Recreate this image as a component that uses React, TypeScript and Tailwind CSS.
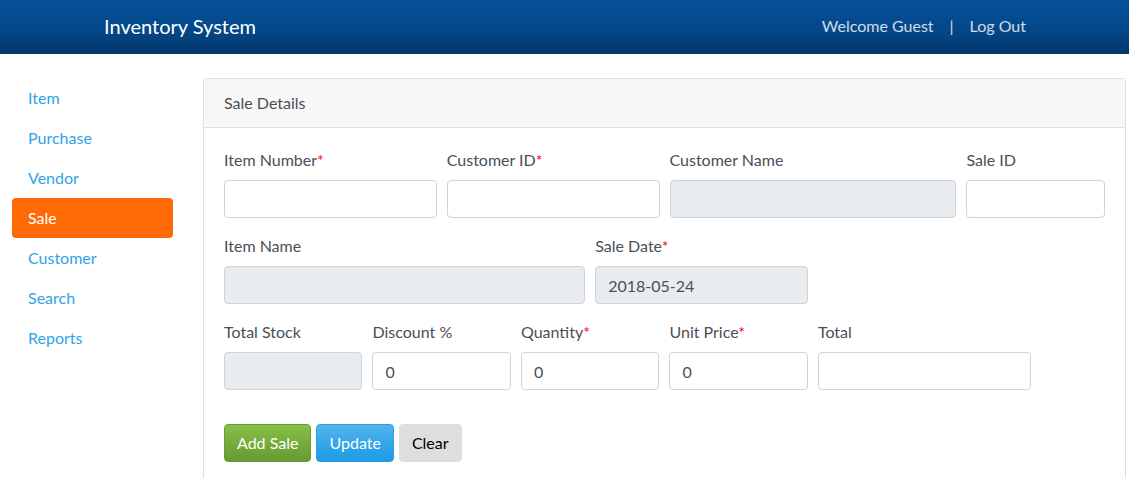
import React from "react";

const navItems = ["Item", "Purchase", "Vendor", "Sale", "Customer", "Search", "Reports"];

type FieldProps = {
  label: string;
  required?: boolean;
  disabled?: boolean;
  value?: string;
  width: string;
};

const Field = ({ label, required, disabled, value, width }: FieldProps) => (
  <div className={`${width} px-[5px] mb-4`}>
    <label className="block mb-2 leading-6 text-[#495057]">
      {label}
      {required && <span className="text-[#ff0000]">*</span>}
    </label>
    <input
      readOnly
      disabled={disabled}
      value={value ?? ""}
      className={`block w-full h-[38px] px-3 rounded border border-[#ced4da] text-[#495057] outline-none ${
        disabled ? "bg-[#e9ecef]" : "bg-white"
      }`}
    />
  </div>
);

const App = () => {
  return (
    <div className="min-h-[478px] bg-white text-base" style={{ fontFamily: "'Segoe UI', Lato, 'Liberation Sans', sans-serif" }}>
      <header className="h-[54px] pb-[2px] flex items-center justify-between pl-[104px] pr-[103px] bg-[linear-gradient(#04519b,#044687_60%,#033769)]">
        <span className="text-white text-[20px]">Inventory System</span>
        <div className="flex items-center gap-4 text-white/80">
          <span>Welcome Guest</span>
          <span>|</span>
          <span>Log Out</span>
        </div>
      </header>

      <div className="flex mt-6">
        <nav className="w-[203px] shrink-0 pl-3 pr-[30px]">
          <ul>
            {navItems.map((item) => (
              <li key={item}>
                <a
                  className={`block h-10 px-4 leading-10 rounded ${
                    item === "Sale" ? "bg-[#ff6a06] text-white" : "text-[#2fa4e7]"
                  }`}
                >
                  {item}
                </a>
              </li>
            ))}
          </ul>
        </nav>

        <div className="flex-1 mr-[3px] border border-[#dfdfdf] border-b-0 rounded-t">
          <div className="h-[49px] px-5 flex items-center bg-[#f7f7f7] border-b border-[#dfdfdf] text-[#495057]">
            Sale Details
          </div>
          <div className="px-5 pt-5 pb-4">
            <div className="flex flex-wrap -mx-[5px]">
              <Field label="Item Number" required width="w-3/12" />
              <Field label="Customer ID" required width="w-3/12" />
              <Field label="Customer Name" disabled width="w-4/12" />
              <Field label="Sale ID" width="w-2/12" />
            </div>
            <div className="flex flex-wrap -mx-[5px]">
              <Field label="Item Name" disabled width="w-5/12" />
              <Field label="Sale Date" required disabled value="2018-05-24" width="w-3/12" />
            </div>
            <div className="flex flex-wrap -mx-[5px]">
              <Field label="Total Stock" disabled width="w-2/12" />
              <Field label="Discount %" value="0" width="w-2/12" />
              <Field label="Quantity" required value="0" width="w-2/12" />
              <Field label="Unit Price" required value="0" width="w-2/12" />
              <Field label="Total" width="w-3/12" />
            </div>
            <div className="flex gap-[5px] mt-[18px]">
              <button className="h-[38px] px-3 rounded text-white bg-[linear-gradient(#88c149,#73a839_60%,#699934)] border border-[#6a9c35]">
                Add Sale
              </button>
              <button className="h-[38px] px-3 rounded text-white bg-[linear-gradient(#54b4eb,#2fa4e7_60%,#1d9ce5)] border border-[#2a9ee3]">
                Update
              </button>
              <button className="h-[38px] px-3 rounded text-black bg-[#dedede] border border-[#dedede]">
                Clear
              </button>
            </div>
          </div>
        </div>
      </div>
    </div>
  );
};

export default App;
